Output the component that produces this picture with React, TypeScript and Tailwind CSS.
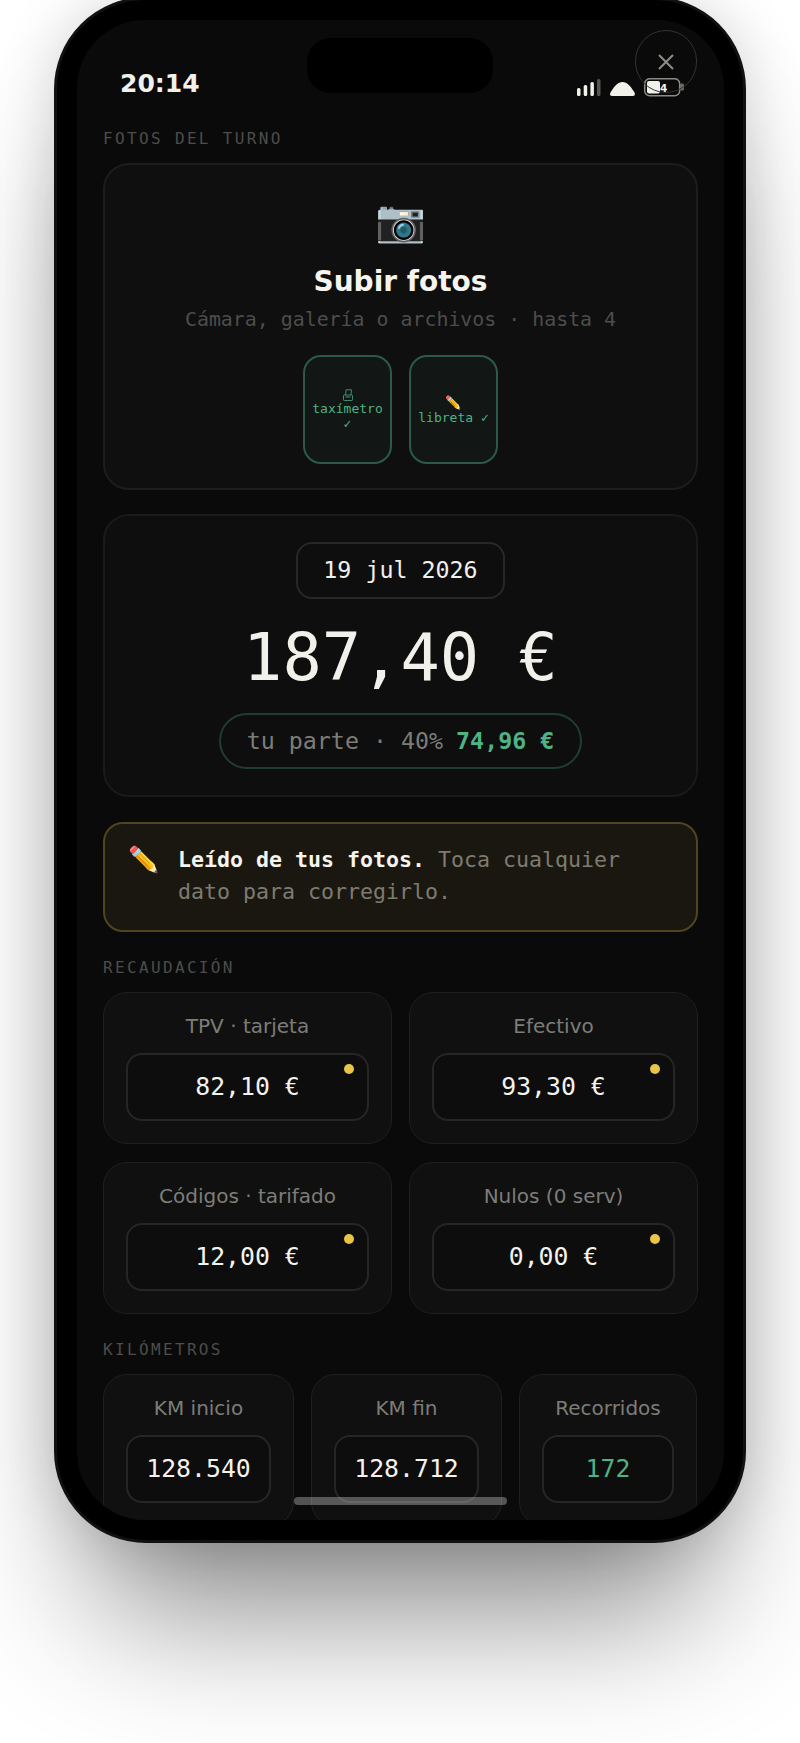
import React from 'react';

const mono = "font-['DejaVu_Sans_Mono',monospace]";

const SectionLabel: React.FC<{ text: string; className?: string }> = ({ text, className = '' }) => (
  <div className={`${mono} text-[16px] leading-[20px] tracking-[2.35px] text-[#4d4d4a] ${className}`}>{text}</div>
);

const Field: React.FC<{ label: string; value: string; dot?: boolean; green?: boolean }> = ({ label, value, dot, green }) => (
  <div className="rounded-[24px] border border-[#1f1f1f] bg-[#101010] px-[22px] pt-[21px] h-[152px]">
    <div className="text-center text-[20px] leading-[24px] text-[#7d7d78]">{label}</div>
    <div className="relative mt-[15px] h-[68px] rounded-[16px] border-2 border-[#262626] bg-[#0d0d0d] flex items-center justify-center">
      <span className={`${mono} text-[24.8px] ${green ? 'text-[#4fb286]' : 'text-[#f4f2ec]'}`}>{value}</span>
      {dot && <span className="absolute right-[13px] top-[9px] w-[10px] h-[10px] rounded-full bg-[#e8c547]" />}
    </div>
  </div>
);

const PrinterIcon: React.FC = () => (
  <svg width="10" height="12" viewBox="0 0 10 12" fill="none" stroke="#3f8f6c" strokeWidth="1" className="mx-auto block">
    <path d="M2.5 6 L3.2 0.8 H8.5 L8 6" />
    <rect x="0.5" y="6" width="9" height="5.5" rx="0.8" />
    <path d="M2.5 8 H7.5" />
  </svg>
);

const Tile: React.FC<{ icon: React.ReactNode; label: string }> = ({ icon, label }) => (
  <div className={`${mono} w-[89px] h-[109px] rounded-[18px] border-2 border-[#2c5a48] bg-[#121715] px-1 flex items-center justify-center text-center text-[13px] leading-[15px] text-[#4fb286]`}>
    <div>
      {icon}
      <div>{label}</div>
    </div>
  </div>
);

const StatusIcons: React.FC = () => (
  <svg width="110" height="20" viewBox="0 0 110 20" className="block">
    <rect x="0" y="10" width="3.5" height="8" rx="1.5" fill="#f2f0ea" />
    <rect x="6.7" y="7" width="3.5" height="11" rx="1.5" fill="#f2f0ea" />
    <rect x="13.4" y="4" width="3.5" height="14" rx="1.5" fill="#f2f0ea" />
    <rect x="20" y="1" width="3.5" height="17" rx="1.5" fill="#555553" />
    <path d="M35 18 C32.5 18 32.5 15 34.5 13 C37.5 8 41 4 45.5 4 C50 4 53.5 8 56.5 13 C58.5 15 58.5 18 56 18 Z" fill="#f2f0ea" />
    <rect x="67.7" y="0.7" width="35" height="17" rx="5" fill="none" stroke="#8a8a86" strokeWidth="1.5" />
    <rect x="70" y="3" width="13" height="12.5" rx="2" fill="#f2f0ea" />
    <rect x="103" y="5.5" width="4" height="7" rx="1.5" fill="#6a6a66" />
  </svg>
);

export default function App() {
  return (
    <div className="w-[800px] h-[1743px] overflow-hidden bg-white font-['DejaVu_Sans',sans-serif]">
      <div className="relative ml-[54px] -mt-[3px] w-[692px] h-[1546px] rounded-[92px] bg-black border-[3px] border-[#111111] p-[20px] shadow-[0_110px_140px_-40px_rgba(0,0,0,0.45),0_0_60px_rgba(0,0,0,0.16)]">
        <div className="relative h-full w-[647px] overflow-hidden rounded-[68px] bg-[#0a0a0a]">
          {/* status bar */}
          <div className="absolute left-[43px] top-[49px] text-[25px] leading-[30px] font-bold text-[#f2f0ea]">20:14</div>
          <div className="absolute left-[230px] top-[18px] w-[186px] h-[55px] rounded-[24px] bg-black" />
          <div className="absolute left-[500px] top-[58px]">
            <StatusIcons />
            <span className="absolute left-[83px] top-[4px] text-[10.5px] leading-[12px] font-bold text-[#f2f0ea]">4</span>
          </div>
          <div className="absolute left-[558px] top-[10px] w-[62px] h-[63px] rounded-full border border-[#333331] flex items-center justify-center">
            <svg width="18" height="18" viewBox="0 0 18 18" fill="none" stroke="#8d8d88" strokeWidth="2">
              <path d="M2 2 L16 16 M16 2 L2 16" />
            </svg>
          </div>

          {/* scroll content */}
          <div className="px-[26px] pt-[109px]">
            <SectionLabel text="FOTOS DEL TURNO" />

            <div className="mt-[14px] h-[327px] rounded-[26px] border-2 border-[#1d1d1d] bg-[#0f0f0f] flex flex-col items-center pt-[29px]">
              <div className="text-[41px] leading-[54px]">📷</div>
              <div className="mt-[18px] text-[28px] leading-[32px] font-bold text-[#f6f4ee]">Subir fotos</div>
              <div className={`${mono} mt-[9px] text-[19.9px] leading-[26px] text-[#4d4d4a]`}>Cámara, galería o archivos · hasta 4</div>
              <div className="mt-[22px] flex gap-[17px]">
                <Tile icon={<PrinterIcon />} label="taxímetro ✓" />
                <Tile icon="✏️" label="libreta ✓" />
              </div>
            </div>

            <div className="mt-[24px] h-[283px] rounded-[26px] border-2 border-[#1a1a1a] bg-[#0e0e0e] flex flex-col items-center pt-[26px]">
              <div className={`${mono} w-[209px] h-[57px] rounded-[16px] border-2 border-[#282828] flex items-center justify-center text-[23.3px] text-[#f2f0ea]`}>19 jul 2026</div>
              <div className={`${mono} mt-[20px] text-[65.4px] leading-[76px] text-[#f2f0ea]`}>187,40 €</div>
              <div className={`${mono} mt-[18px] w-[363px] h-[56px] rounded-full border-2 border-[#1f3d32] flex items-center justify-center gap-[13px] text-[23.3px] text-[#7d7d78]`}>
                <span>tu parte · 40%</span>
                <span className="font-bold text-[#4fb286]">74,96 €</span>
              </div>
            </div>

            <div className={`${mono} mt-[25px] h-[110px] rounded-[20px] border-2 border-[#4f4520] bg-[#1a1710] flex pl-[23px] pt-[20px] text-[21.6px] leading-[32px]`}>
              <span className="w-[50px] shrink-0 text-[25px] leading-[32px]">✏️</span>
              <p className="w-[480px] text-[#7d7b70]">
                <strong className="font-bold text-[#f6f4ee]">Leído de tus fotos.</strong> Toca cualquier dato para corregirlo.
              </p>
            </div>

            <SectionLabel text="RECAUDACIÓN" className="mt-[26px]" />
            <div className="mt-[14px] grid grid-cols-2 gap-x-[17px] gap-y-[18px]">
              <Field label="TPV · tarjeta" value="82,10 €" dot />
              <Field label="Efectivo" value="93,30 €" dot />
              <Field label="Códigos · tarifado" value="12,00 €" dot />
              <Field label="Nulos (0 serv)" value="0,00 €" dot />
            </div>

            <SectionLabel text="KILÓMETROS" className="mt-[26px]" />
            <div className="mt-[14px] grid grid-cols-[191px_191px_178px] gap-[17px]">
              <Field label="KM inicio" value="128.540" />
              <Field label="KM fin" value="128.712" />
              <Field label="Recorridos" value="172" green />
            </div>
          </div>

          {/* home indicator */}
          <div className="absolute left-[217px] bottom-[15px] w-[213px] h-[8px] rounded-full bg-white/30" />
        </div>
      </div>
    </div>
  );
}
